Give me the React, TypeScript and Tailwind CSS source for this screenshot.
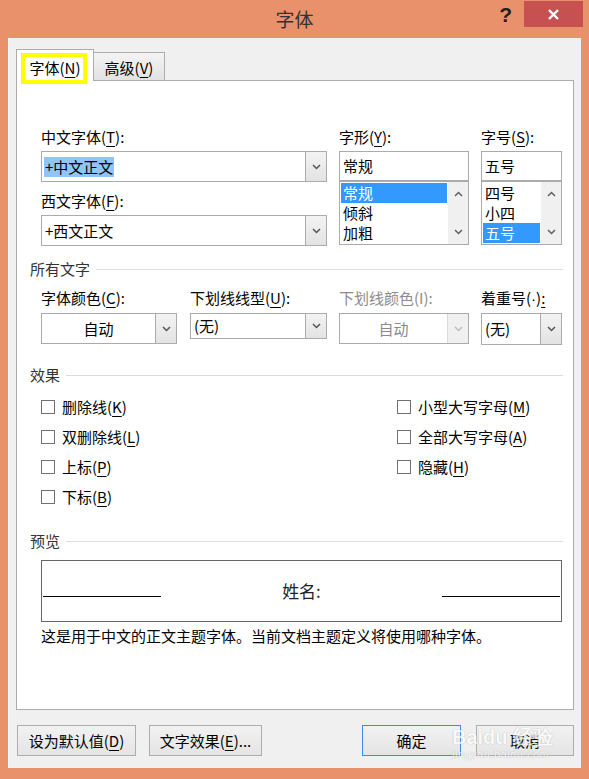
import type { ReactNode } from "react";

function Chevron({ up = false, color = "#555555" }: { up?: boolean; color?: string }) {
    return (
        <svg width="9" height="6" viewBox="0 0 9 6">
            <polyline
                points={up ? "1,5 4.5,1.5 8,5" : "1,1 4.5,4.5 8,1"}
                fill="none"
                stroke={color}
                strokeWidth="1.5"
            />
        </svg>
    );
}

// underlined access key letter
function Key({ k }: { k: string }) {
    return <u className="underline decoration-1 underline-offset-[3px]">{k}</u>;
}

function Label({ children, className = "" }: { children: ReactNode; className?: string }) {
    return <div className={"h-[20px] leading-[20px] text-[15px] whitespace-nowrap " + className}>{children}</div>;
}

function Combo({
    children,
    className = "",
    center = false,
    disabled = false,
}: {
    children: ReactNode;
    className?: string;
    center?: boolean;
    disabled?: boolean;
}) {
    return (
        <div className={"flex border border-[#ABABAB] bg-white " + className}>
            <div
                className={
                    "flex-1 flex items-center text-[15px] leading-[20px] " +
                    (center ? "justify-center " : "pl-[3px] ") +
                    (disabled ? "text-[#8A8A8A]" : "text-black")
                }
            >
                {children}
            </div>
            {disabled ? (
                <div className="w-[21px] border-l border-[#DADADA] bg-[#F0F0F0] flex items-center justify-center">
                    <Chevron color="#BDBDBD" />
                </div>
            ) : (
                <div className="w-[21px] border-l border-[#ABABAB] bg-linear-to-b from-[#F3F3F3] to-[#E3E3E3] flex items-center justify-center">
                    <Chevron />
                </div>
            )}
        </div>
    );
}

function ListBox({ items, selected }: { items: string[]; selected: number }) {
    return (
        <div className="h-[64px] flex border border-[#ABABAB] bg-white">
            <div className="flex-1 pt-[1px] pl-[1px] pr-[1px]">
                {items.map((it, i) => (
                    <div
                        key={it}
                        className={
                            "h-[20px] leading-[20px] pl-[2px] text-[15px] " +
                            (i === selected ? "bg-[#3399FF] text-white" : "text-black")
                        }
                    >
                        {it}
                    </div>
                ))}
            </div>
            <div className="w-[20px] bg-[#F0F0F0] flex flex-col items-center justify-between py-[9px]">
                <Chevron up color="#606060" />
                <Chevron color="#606060" />
            </div>
        </div>
    );
}

function SectionHead({ title, className = "" }: { title: string; className?: string }) {
    return (
        <div className={"flex items-center h-[20px] " + className}>
            <span className="text-[15px] leading-[20px] text-[#333333]">{title}</span>
            <div className="flex-1 h-px bg-[#DCDCDC] ml-[6px]" />
        </div>
    );
}

function Check({ children }: { children: ReactNode }) {
    return (
        <div className="h-[30px] flex items-center">
            <div className="w-[14px] h-[14px] border border-[#707070] bg-white" />
            <span className="ml-[7px] text-[15px] leading-[20px] whitespace-nowrap">{children}</span>
        </div>
    );
}

function Btn({ children, className = "", primary = false }: { children: ReactNode; className?: string; primary?: boolean }) {
    return (
        <button
            className={
                "h-[31px] border bg-linear-to-b from-[#F2F2F2] to-[#E4E4E4] text-[15px] leading-[20px] text-black flex items-center justify-center " +
                (primary ? "border-[#3C8CE8] " : "border-[#ADADAD] ") +
                className
            }
        >
            {children}
        </button>
    );
}

export default function App() {
    return (
        <div className="relative w-[589px] h-[779px] overflow-hidden bg-[#E9916A] flex flex-col font-['Noto_Sans_CJK_SC',sans-serif] text-black">
            {/* title bar */}
            <div className="h-[38px] grid grid-cols-[1fr_auto_1fr]">
                <div />
                <div className="pt-[6px] text-[19px] leading-[26px] text-[#333333]">字体</div>
                <div className="flex justify-end items-start pr-[6px]">
                    <span className="mt-[4px] mr-[12px] font-['Liberation_Sans',sans-serif] font-bold text-[21px] leading-[22px] text-[#222222]">
                        ?
                    </span>
                    <div className="mt-[1px] w-[59px] h-[26px] bg-[#C75050] flex items-center justify-center">
                        <svg width="11" height="11" viewBox="0 0 11 11">
                            <path d="M1 1 L10 10 M10 1 L1 10" stroke="#ffffff" strokeWidth="2.4" />
                        </svg>
                    </div>
                </div>
            </div>

            {/* client area */}
            <div className="mx-[8px] h-[730px] bg-[#F0F0F0] border-l border-[#F7F7F7] px-[7px] pt-[11px]">
                {/* tabs */}
                <div className="flex items-end h-[31px]">
                    <div className="relative z-10 -mb-px h-[32px] w-[78px] bg-white border border-b-0 border-[#ACACAC] flex justify-center pt-[8px]">
                        <span className="text-[15px] leading-[20px]">
                            字体(<Key k="N" />)
                        </span>
                        <div className="absolute left-[4px] top-[3px] w-[66px] h-[31px] border-[4px] border-[#FFFF00]" />
                    </div>
                    <div className="h-[28px] w-[71px] border-t border-r border-[#ACACAC] bg-linear-to-b from-[#F4F4F4] to-[#E2E2E2] flex justify-center pt-[5px]">
                        <span className="text-[15px] leading-[20px]">
                            高级(<Key k="V" />)
                        </span>
                    </div>
                </div>

                {/* tab panel */}
                <div className="h-[630px] border border-[#ACACAC] bg-white pl-[13px] pr-[10px] pt-[46px] flex flex-col">
                    <div className="ml-[11px] flex items-start">
                        <div className="w-[286px]">
                            <Label>
                                中文字体(<Key k="T" />):
                            </Label>
                            <div className="mt-[4px] h-[31px] flex border border-[#ABABAB] bg-white">
                                <div className="flex-1 flex items-center pl-[2px]">
                                    <span className="bg-[#91C5F8] px-[1px] text-[15px] leading-[20px]">+中文正文</span>
                                </div>
                                <div className="w-[21px] border-l border-[#ABABAB] bg-linear-to-b from-[#F3F3F3] to-[#E3E3E3] flex items-center justify-center">
                                    <Chevron />
                                </div>
                            </div>
                            <Label className="mt-[9px]">
                                西文字体(<Key k="F" />):
                            </Label>
                            <Combo className="mt-[4px] h-[31px]">+西文正文</Combo>
                        </div>
                        <div className="ml-[12px] w-[130px]">
                            <Label>
                                字形(<Key k="Y" />):
                            </Label>
                            <div className="mt-[4px] h-[30px] border border-[#ABABAB] bg-white flex items-center pl-[3px] text-[15px] leading-[20px]">
                                常规
                            </div>
                            <ListBox items={["常规", "倾斜", "加粗"]} selected={0} />
                        </div>
                        <div className="ml-[12px] w-[81px]">
                            <Label>
                                字号(<Key k="S" />):
                            </Label>
                            <div className="mt-[4px] h-[30px] border border-[#ABABAB] bg-white flex items-center pl-[3px] text-[15px] leading-[20px]">
                                五号
                            </div>
                            <ListBox items={["四号", "小四", "五号"]} selected={2} />
                        </div>
                    </div>

                    <SectionHead title="所有文字" className="mt-[13px]" />

                    <div className="ml-[11px] mt-[9px] flex items-start">
                        <div className="w-[136px]">
                            <Label>
                                字体颜色(<Key k="C" />):
                            </Label>
                            <Combo className="mt-[5px] h-[31px]" center>
                                自动
                            </Combo>
                        </div>
                        <div className="ml-[13px] w-[137px]">
                            <Label>
                                下划线线型(<Key k="U" />):
                            </Label>
                            <Combo className="mt-[5px] h-[26px]">(无)</Combo>
                        </div>
                        <div className="ml-[12px] w-[130px]">
                            <Label className="text-[#8C8C8C]">下划线颜色(I):</Label>
                            <Combo className="mt-[5px] h-[31px]" center disabled>
                                自动
                            </Combo>
                        </div>
                        <div className="ml-[12px] w-[81px]">
                            <Label>
                                着重号(<span className="font-['Liberation_Sans',sans-serif]">·</span>)<Key k=":" />
                            </Label>
                            <Combo className="mt-[5px] h-[32px]">(无)</Combo>
                        </div>
                    </div>

                    <SectionHead title="效果" className="mt-[20px]" />

                    <div className="ml-[11px] mt-[7px] flex">
                        <div className="w-[356px] flex flex-col">
                            <Check>
                                删除线(<Key k="K" />)
                            </Check>
                            <Check>
                                双删除线(<Key k="L" />)
                            </Check>
                            <Check>
                                上标(<Key k="P" />)
                            </Check>
                            <Check>
                                下标(<Key k="B" />)
                            </Check>
                        </div>
                        <div className="flex flex-col">
                            <Check>
                                小型大写字母(<Key k="M" />)
                            </Check>
                            <Check>
                                全部大写字母(<Key k="A" />)
                            </Check>
                            <Check>
                                隐藏(<Key k="H" />)
                            </Check>
                        </div>
                    </div>

                    <SectionHead title="预览" className="mt-[19px]" />

                    <div className="ml-[11px] mt-[9px] w-[521px] h-[62px] border border-[#666666] flex items-start px-[1px]">
                        <div className="w-[118px] h-[36px] border-b border-black" />
                        <div className="flex-1 text-center pt-[19px] text-[17px] leading-[22px] text-[#222222]">姓名:</div>
                        <div className="w-[118px] h-[36px] border-b border-black" />
                    </div>

                    <div className="ml-[11px] mt-[4px] text-[15px] leading-[20px] whitespace-nowrap">
                        这是用于中文的正文主题字体。当前文档主题定义将使用哪种字体。
                    </div>
                </div>

                {/* buttons */}
                <div className="mt-[15px] flex pl-[1px]">
                    <Btn className="w-[119px]">
                        设为默认值(<Key k="D" />)
                    </Btn>
                    <Btn className="ml-[13px] w-[113px]">
                        文字效果(<Key k="E" />)...
                    </Btn>
                    <div className="flex-1" />
                    <Btn className="w-[99px]" primary>
                        确定
                    </Btn>
                    <Btn className="ml-[15px] w-[98px]">取消</Btn>
                </div>
            </div>

            {/* watermark over the screenshot */}
            <div className="absolute left-[452px] top-[726px] flex flex-col items-start opacity-70 pointer-events-none whitespace-nowrap">
                <span className="font-['Liberation_Sans',sans-serif] font-bold text-[20px] leading-[22px] text-white [text-shadow:0_0_1px_#8a8a8a]">
                    Baidu 经验
                </span>
                <span className="font-['Liberation_Sans',sans-serif] text-[11px] leading-[13px] text-white [text-shadow:0_0_1px_#8a8a8a] tracking-[0.5px]">
                    jingyan.baidu.com
                </span>
            </div>
        </div>
    );
}
